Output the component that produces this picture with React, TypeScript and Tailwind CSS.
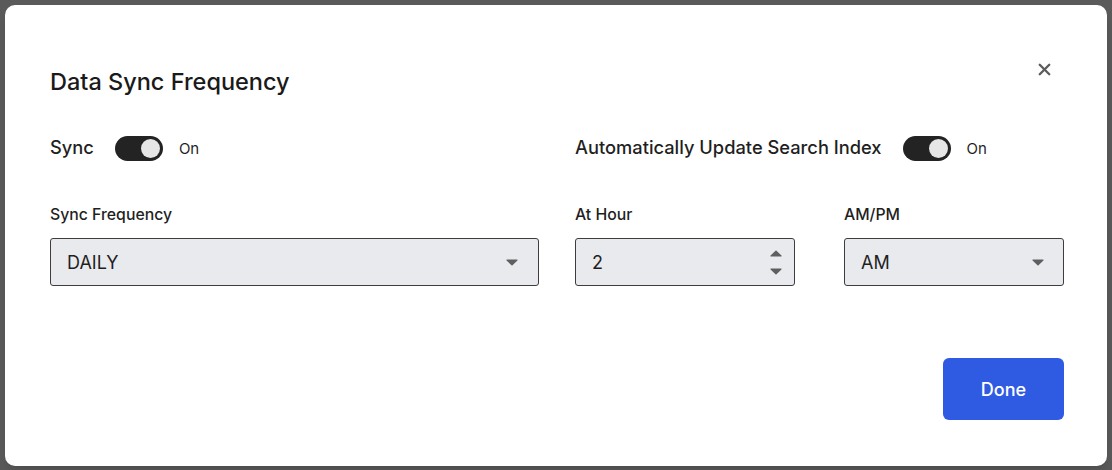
import { X } from 'lucide-react';

function Toggle({ label, on }: { label: string; on: boolean }) {
  return (
    <div className="flex items-center h-[24px]">
      <span className="text-[18.3px] font-medium text-[#1f1f1f]">{label}</span>
      <button className="ml-[21px] w-[48px] h-[25px] rounded-full bg-[#232323] flex items-center justify-end pr-[3px]">
        <span className="block w-[19px] h-[19px] rounded-full bg-[#e6e6e6]" />
      </button>
      <span className="ml-[16px] text-[15px] leading-[24px] pt-[1px] text-[#1f1f1f]">{on ? 'On' : 'Off'}</span>
    </div>
  );
}

function Caret({ up }: { up?: boolean }) {
  return (
    <svg width="12" height="7" viewBox="0 0 12 7" className={up ? 'rotate-180' : ''}>
      <path d="M1 0.5h10a0.6 0.6 0 0 1 0.45 1L6.5 6.3a0.7 0.7 0 0 1-1 0L0.55 1.5A0.6 0.6 0 0 1 1 0.5z" fill="#5f5f5f" />
    </svg>
  );
}

function Field({ label, children }: { label: string; children: React.ReactNode }) {
  return (
    <div className="flex flex-col">
      <label className="text-[15.8px] font-medium text-[#1f1f1f] h-[20px] leading-[20px] mb-[13px]">{label}</label>
      {children}
    </div>
  );
}

export default function App() {
  return (
    <div className="h-[470px] w-[1112px] bg-[#5a5a5a] p-[5px] pb-[4px]" style={{ fontFamily: 'Inter, "Noto Sans", sans-serif' }}>
      <div className="h-full bg-white rounded-[10px] pl-[45px] pr-[43px] pt-[62px] flex flex-col relative shadow-lg">
        <button className="absolute right-[53px] top-[55px] text-[#5c5c5c]">
          <X size={19} strokeWidth={3} />
        </button>

        <h2 className="text-[23.5px] font-medium text-[#1a1a1a] leading-[30px]">Data Sync Frequency</h2>

        <div className="grid grid-cols-2 gap-x-[36px] mt-[39px]">
          <Toggle label="Sync" on />
          <Toggle label="Automatically Update Search Index" on />
        </div>

        <div className="grid grid-cols-2 gap-x-[36px] mt-[45px]">
          <Field label="Sync Frequency">
            <div className="h-[48px] border border-[#3d3d3d] rounded-[3px] bg-[#e9eaed] flex items-center justify-between pl-[16px] pr-[20px]">
              <span className="text-[18px] text-[#1f1f1f]">DAILY</span>
              <Caret />
            </div>
          </Field>
          <div className="grid grid-cols-2 gap-x-[49px]">
            <Field label="At Hour">
              <div className="h-[48px] border border-[#3d3d3d] rounded-[3px] bg-[#e9eaed] flex items-center justify-between pl-[16px] pr-[12px]">
                <span className="text-[18px] text-[#1f1f1f]">2</span>
                <div className="flex flex-col gap-[11px]">
                  <Caret up />
                  <Caret />
                </div>
              </div>
            </Field>
            <Field label="AM/PM">
              <div className="h-[48px] border border-[#3d3d3d] rounded-[3px] bg-[#e9eaed] flex items-center justify-between pl-[16px] pr-[19px]">
                <span className="text-[18px] text-[#1f1f1f]">AM</span>
                <Caret />
              </div>
            </Field>
          </div>
        </div>

        <div className="flex justify-end mt-[72px]">
          <button className="w-[121px] h-[62px] rounded-[6px] bg-[#2f5be3] text-white text-[18px] font-medium">Done</button>
        </div>
      </div>
    </div>
  );
}
